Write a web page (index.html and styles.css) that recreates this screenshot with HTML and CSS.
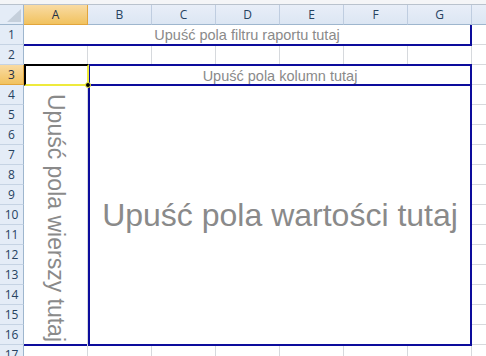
FILE: index.html
```html
<!DOCTYPE html>
<html lang="pl">
<head>
  <meta charset="UTF-8" />
  <title>Tabela przestawna</title>
  <link rel="stylesheet" href="styles.css">
</head>
<body>
  <div class="window-edge"></div>

  <div class="sheet">
    <div class="corner"><span class="corner-mark"></span></div>

    <div class="col-heads">
      <div class="col-head active">A</div>
      <div class="col-head">B</div>
      <div class="col-head">C</div>
      <div class="col-head">D</div>
      <div class="col-head">E</div>
      <div class="col-head">F</div>
      <div class="col-head">G</div>
      <div class="col-head"></div>
    </div>

    <div class="row-heads">
      <div class="row-head">1</div>
      <div class="row-head">2</div>
      <div class="row-head active">3</div>
      <div class="row-head">4</div>
      <div class="row-head">5</div>
      <div class="row-head">6</div>
      <div class="row-head">7</div>
      <div class="row-head">8</div>
      <div class="row-head">9</div>
      <div class="row-head">10</div>
      <div class="row-head">11</div>
      <div class="row-head">12</div>
      <div class="row-head">13</div>
      <div class="row-head">14</div>
      <div class="row-head">15</div>
      <div class="row-head">16</div>
      <div class="row-head">17</div>
    </div>

    <div class="cells">
      <!-- pivot table drop zones -->
      <div class="zone zone-filter">Upuść pola filtru raportu tutaj</div>
      <div class="zone zone-columns">Upuść pola kolumn tutaj</div>
      <div class="zone zone-rows"><span>Upuść pola wierszy tutaj</span></div>
      <div class="zone zone-values">Upuść pola wartości tutaj</div>

      <div class="selection"><span class="fill-handle"></span></div>
    </div>
  </div>
</body>
</html>
```

FILE: styles.css
```css
* {
  box-sizing: border-box;
}

body {
  margin: 0;
  width: 486px;
  height: 356px;
  overflow: hidden;
  background-color: #fff;
  font-family: "Liberation Sans", Arial, sans-serif;
}

.window-edge {
  height: 5px;
  background-color: #f4f5f7;
  border-bottom: 1px solid #b9c2cd;
}

.sheet {
  display: grid;
  grid-template-columns: 24px 1fr;
  grid-template-rows: 20px 1fr;
}

/* headers */

.corner {
  background-color: #e4ecf7;
  border-right: 1px solid #9eb6ce;
  border-bottom: 1px solid #9eb6ce;
  display: flex;
  justify-content: flex-end;
  align-items: flex-end;
  padding: 0 2px 2px 0;
}

.corner-mark {
  width: 14px;
  height: 13px;
  background-color: #c5cfdb;
  clip-path: polygon(100% 0, 100% 100%, 0 100%);
}

.col-heads {
  display: flex;
}

.col-head {
  flex: 0 0 64px;
  height: 20px;
  background: linear-gradient(#e8eef8, #dce6f3);
  border-right: 1px solid #bfcde0;
  border-bottom: 1px solid #9eb6ce;
  color: #27425f;
  font-family: "Open Sans", sans-serif;
  font-size: 12px;
  display: flex;
  align-items: center;
  justify-content: center;
}

.row-heads {
  display: flex;
  flex-direction: column;
}

.row-head {
  flex: 0 0 20px;
  background-color: #e4ecf7;
  border-right: 1px solid #9eb6ce;
  border-bottom: 1px solid #c5d3e4;
  color: #27425f;
  font-family: "Open Sans", sans-serif;
  font-size: 12px;
  display: flex;
  align-items: center;
  justify-content: center;
}

.col-head.active,
.row-head.active {
  background: linear-gradient(#f9dba3, #f1c25f);
  border-color: #e2a53c;
  color: #1f2f45;
}

/* cell grid */

.cells {
  display: grid;
  grid-template-columns: repeat(8, 64px);
  grid-template-rows: repeat(17, 20px);
  background-image:
    linear-gradient(to right, transparent 63px, #d6d9dd 63px),
    linear-gradient(to bottom, transparent 19px, #d6d9dd 19px);
  background-size: 64px 20px;
}

.zone {
  color: #8a8a8a;
  display: flex;
  align-items: center;
  justify-content: center;
  background-color: #fff;
  white-space: nowrap;
  overflow: hidden;
}

.zone-filter {
  grid-column: 1 / 8;
  grid-row: 1;
  font-size: 14.5px;
  border-right: 2px solid #0c0c9c;
  border-bottom: 2px solid #0c0c9c;
  margin-bottom: -1px;
}

.zone-columns {
  grid-column: 2 / 8;
  grid-row: 3;
  font-size: 14.5px;
  border: 2px solid #0c0c9c;
  border-bottom: none;
  margin-top: -1px;
}

.zone-rows {
  grid-column: 1;
  grid-row: 4 / 17;
  align-items: flex-start;
  padding-top: 9px;
  font-size: 23px;
  border-bottom: 2px solid #0c0c9c;
  margin-bottom: -1px;
  margin-right: 1px;
}

.zone-rows span {
  writing-mode: vertical-rl;
}

.zone-values {
  grid-column: 2 / 8;
  grid-row: 4 / 17;
  font-size: 32px;
  border: 2px solid #0c0c9c;
  margin-top: -1px;
  margin-bottom: -1px;
}

/* active cell A3 */

.selection {
  grid-column: 1;
  grid-row: 3;
  position: relative;
  border-top: 2px solid #000;
  border-left: 2px solid #000;
  border-right: 2px solid #eeea3c;
  border-bottom: 2px solid #eeea3c;
  margin: -1px -1px -1px 0;
}

.fill-handle {
  position: absolute;
  right: -4px;
  bottom: -4px;
  width: 6px;
  height: 6px;
  background-color: #000;
  border: 1px solid #eeea3c;
  border-radius: 50%;
}
```
